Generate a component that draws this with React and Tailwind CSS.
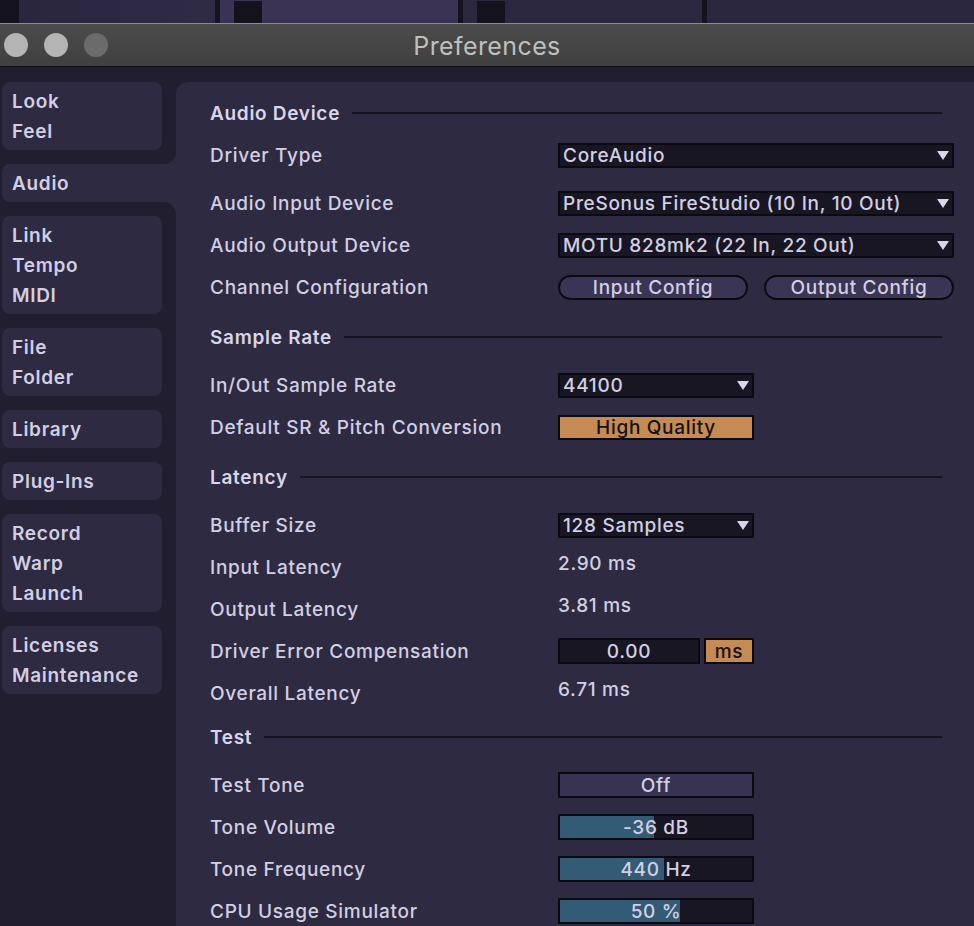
import React from "react";

const SIDE_TOP = [["Look", "Feel"]];
const SIDE_BOTTOM = [
  ["Link", "Tempo", "MIDI"],
  ["File", "Folder"],
  ["Library"],
  ["Plug-Ins"],
  ["Record", "Warp", "Launch"],
  ["Licenses", "Maintenance"],
];

function SideItem({ lines }) {
  return (
    <div className="w-[160px] rounded-[8px] bg-[#2d2a42] px-[10px] pb-[3px] pt-[5px]">
      {lines.map((l) => (
        <div key={l} className="h-[30px] leading-[30px]">
          {l}
        </div>
      ))}
    </div>
  );
}

function Header({ title, className = "" }) {
  return (
    <div className={`flex h-[42px] items-center ${className}`}>
      <span className="pt-[2px] font-semibold text-[#d9d6ea]">{title}</span>
      <div className="ml-[12px] mr-[12px] h-[2px] flex-1 bg-[#16141f]"></div>
    </div>
  );
}

function Row({ label, children, className = "" }) {
  return (
    <div className={`flex h-[42px] items-center ${className}`}>
      <div className="w-[348px] shrink-0 pt-[2px]">{label}</div>
      {children}
    </div>
  );
}

function Arrow() {
  return (
    <svg width="12" height="9" viewBox="0 0 12 9" className="shrink-0">
      <path d="M0 0 L12 0 L6 9 Z" fill="#d8d4ea" />
    </svg>
  );
}

function Dropdown({ value, wide }) {
  return (
    <div
      className={`flex h-[25px] items-center justify-between border-2 border-[#0b0a10] bg-[#191624] pl-[3px] pr-[3px] ${
        wide ? "w-[396px]" : "w-[196px]"
      }`}
    >
      <span className="leading-none">{value}</span>
      <Arrow />
    </div>
  );
}

function Slider({ value, fill }) {
  return (
    <div className="grid h-[26px] w-[196px] border-2 border-[#0b0a10] bg-[#191624]">
      <div className={`col-start-1 row-start-1 h-full bg-[#335b76] ${fill}`}></div>
      <div className="col-start-1 row-start-1 flex items-center justify-center leading-none">
        {value}
      </div>
    </div>
  );
}

export default function App() {
  return (
    <div className="flex h-[926px] w-[974px] flex-col overflow-hidden bg-[#211e30] font-['Inter',sans-serif] text-[19px] font-medium tracking-[0.7px] text-[#d2cfe3]">
      {/* window strip behind */}
      <div className="flex h-[23px] shrink-0">
        <div className="w-[19px] bg-[#14121c]"></div>
        <div className="w-[196px] bg-linear-to-r from-[#2a263d] to-[#302b46]"></div>
        <div className="w-[5px] bg-[#15131c]"></div>
        <div className="w-[238px] bg-[#3a3354] pl-[14px] pt-[1px]">
          <div className="h-full w-[28px] bg-[#14121c]"></div>
        </div>
        <div className="w-[5px] bg-[#15131c]"></div>
        <div className="w-[239px] bg-[#2c2840] pl-[14px] pt-[1px]">
          <div className="h-full w-[28px] bg-[#14121c]"></div>
        </div>
        <div className="w-[5px] bg-[#15131c]"></div>
        <div className="flex-1 bg-[#2b273e]"></div>
      </div>
      <div className="h-[1px] shrink-0 bg-[#8c8c8c]"></div>

      {/* title bar */}
      <div className="grid h-[42px] shrink-0 grid-cols-[1fr_auto_1fr] items-center bg-linear-to-b from-[#4b4b4b] to-[#404040]">
        <div className="flex items-center gap-[16px] pl-[4px]">
          <div className="h-[24px] w-[24px] rounded-full bg-[#b4b4b4]"></div>
          <div className="h-[24px] w-[24px] rounded-full bg-[#b4b4b4]"></div>
          <div className="h-[24px] w-[24px] rounded-full bg-[#6b6b6b]"></div>
        </div>
        <div className="pt-[3px] text-[25px] font-normal tracking-[0.4px] text-[#bfbfbf]">Preferences</div>
        <div></div>
      </div>
      <div className="h-[1px] shrink-0 bg-[#0e0e0e]"></div>

      <div className="flex flex-1">
        {/* sidebar */}
        <div className="flex w-[176px] shrink-0 flex-col bg-linear-to-r from-[#211e30] from-50% to-[#2d2a42] to-50% font-semibold">
          <div className="flex flex-col rounded-br-[12px] bg-[#211e30] pb-[14px] pl-[2px] pt-[15px]">
            {SIDE_TOP.map((lines) => (
              <SideItem key={lines[0]} lines={lines} />
            ))}
          </div>
          <div className="ml-[2px] flex h-[38px] items-center rounded-l-[8px] bg-[#2d2a42] pl-[10px] pt-[2px]">
            Audio
          </div>
          <div className="flex flex-1 flex-col gap-[14px] rounded-tr-[12px] bg-[#211e30] pl-[2px] pt-[14px]">
            {SIDE_BOTTOM.map((lines) => (
              <SideItem key={lines[0]} lines={lines} />
            ))}
          </div>
        </div>

        {/* main panel */}
        <div className="mt-[15px] flex-1 rounded-tl-[12px] bg-[#2d2a42] pl-[34px] pr-[20px] pt-[10px]">
          <Header title="Audio Device" />
          <Row label="Driver Type">
            <Dropdown value="CoreAudio" wide />
          </Row>
          <Row label="Audio Input Device" className="mt-[6px]">
            <Dropdown value="PreSonus FireStudio (10 In, 10 Out)" wide />
          </Row>
          <Row label="Audio Output Device">
            <Dropdown value="MOTU 828mk2 (22 In, 22 Out)" wide />
          </Row>
          <Row label="Channel Configuration">
            <div className="flex gap-[16px]">
              <div className="flex h-[25px] w-[190px] items-center justify-center rounded-full border-2 border-[#0b0a10] bg-[#3a3554] leading-none">
                Input Config
              </div>
              <div className="flex h-[25px] w-[190px] items-center justify-center rounded-full border-2 border-[#0b0a10] bg-[#3a3554] leading-none">
                Output Config
              </div>
            </div>
          </Row>

          <Header title="Sample Rate" className="mt-[8px]" />
          <Row label="In/Out Sample Rate" className="mt-[6px]">
            <Dropdown value="44100" />
          </Row>
          <Row label="Default SR & Pitch Conversion">
            <div className="flex h-[25px] w-[196px] items-center justify-center border-2 border-[#0b0a10] bg-[#c58b53] leading-none text-[#141018]">
              High Quality
            </div>
          </Row>

          <Header title="Latency" className="mt-[8px]" />
          <Row label="Buffer Size" className="mt-[6px]">
            <Dropdown value="128 Samples" />
          </Row>
          <Row label="Input Latency">
            <span className="pb-[6px]">2.90 ms</span>
          </Row>
          <Row label="Output Latency">
            <span className="pb-[6px]">3.81 ms</span>
          </Row>
          <Row label="Driver Error Compensation">
            <div className="flex gap-[4px]">
              <div className="flex h-[26px] w-[142px] items-center justify-center border-2 border-[#0b0a10] bg-[#191624] leading-none">
                0.00
              </div>
              <div className="flex h-[26px] w-[50px] items-center justify-center border-2 border-[#0b0a10] bg-[#c58b53] leading-none text-[#141018]">
                ms
              </div>
            </div>
          </Row>
          <Row label="Overall Latency">
            <span className="pb-[6px]">6.71 ms</span>
          </Row>

          <Header title="Test" className="mt-[2px]" />
          <Row label="Test Tone" className="mt-[6px]">
            <div className="flex h-[26px] w-[196px] items-center justify-center border-2 border-[#0b0a10] bg-[#383252] leading-none">
              Off
            </div>
          </Row>
          <Row label="Tone Volume">
            <Slider value="-36 dB" fill="w-[94px]" />
          </Row>
          <Row label="Tone Frequency">
            <Slider value="440 Hz" fill="w-[104px]" />
          </Row>
          <Row label="CPU Usage Simulator">
            <Slider value="50 %" fill="w-[120px]" />
          </Row>
        </div>
      </div>
    </div>
  );
}
